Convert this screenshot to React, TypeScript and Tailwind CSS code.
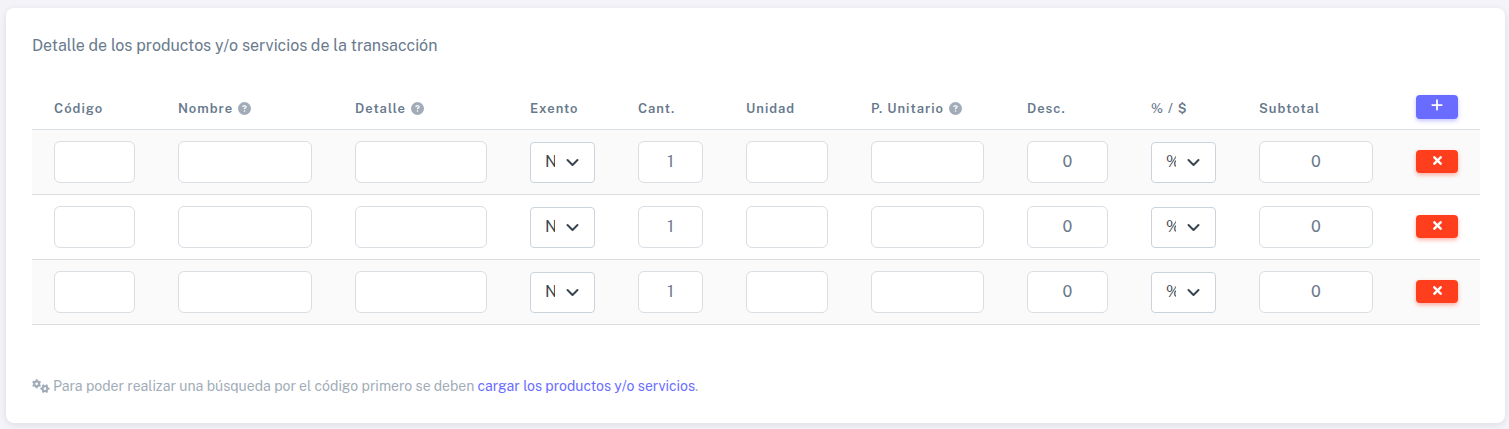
import type { ReactNode } from "react";
import { FaTimes } from "react-icons/fa";
import { FaCircleQuestion, FaGears, FaPlus } from "react-icons/fa6";

type Column = { label: string; width: string; help?: string };

const columns: Column[] = [
  { label: "Código", width: "w-[124px]" },
  { label: "Nombre", width: "w-[177px]", help: "Ayuda sobre el nombre" },
  { label: "Detalle", width: "w-[175px]", help: "Ayuda sobre el detalle" },
  { label: "Exento", width: "w-[108px]" },
  { label: "Cant.", width: "w-[108px]" },
  { label: "Unidad", width: "w-[125px]" },
  { label: "P. Unitario", width: "w-[156px]", help: "Ayuda sobre el precio unitario" },
  { label: "Desc.", width: "w-[124px]" },
  { label: "% / $", width: "w-[108px]" },
  { label: "Subtotal", width: "w-[157px]" },
];

function Cell({ children }: { children: ReactNode }) {
  return <td className="py-[11px] pl-[22px] pr-[21px] align-middle last:pr-[22px]">{children}</td>;
}

function Field({ label, value = "" }: { label: string; value?: string }) {
  return (
    <input
      type="text"
      aria-label={label}
      defaultValue={value}
      className="block h-[42px] w-full rounded-md border border-[#d9dee3] bg-white px-3 text-center text-base text-[#697a8d] outline-none focus:border-[#696cff]"
    />
  );
}

function Choice({ label, options }: { label: string; options: string[] }) {
  return (
    <div className="relative mt-px">
      <select
        aria-label={label}
        className="block h-[41px] w-full appearance-none rounded-sm border border-[#ccd4db] bg-white pl-3.5 pr-[39px] text-base text-[#384551] outline-none focus:border-[#696cff]"
      >
        {options.map((option) => (
          <option key={option}>{option}</option>
        ))}
      </select>
      <svg
        viewBox="0 0 16 16"
        fill="none"
        stroke="#384551"
        strokeWidth="2"
        strokeLinecap="round"
        strokeLinejoin="round"
        aria-hidden="true"
        className="pointer-events-none absolute right-3.5 top-3 size-4"
      >
        <path d="M2.5 6l5 5 5-5" />
      </svg>
    </div>
  );
}

function Row({ index }: { index: number }) {
  return (
    <tr className="border-b border-[#d9dee3] odd:bg-[#fafafa]">
      <Cell><Field label={`Código ${index}`} /></Cell>
      <Cell><Field label={`Nombre ${index}`} /></Cell>
      <Cell><Field label={`Detalle ${index}`} /></Cell>
      <Cell><Choice label={`Exento ${index}`} options={["No", "Si"]} /></Cell>
      <Cell><Field label={`Cantidad ${index}`} value="1" /></Cell>
      <Cell><Field label={`Unidad ${index}`} /></Cell>
      <Cell><Field label={`Precio unitario ${index}`} /></Cell>
      <Cell><Field label={`Descuento ${index}`} value="0" /></Cell>
      <Cell><Choice label={`Tipo de descuento ${index}`} options={["%", "$"]} /></Cell>
      <Cell><Field label={`Subtotal ${index}`} value="0" /></Cell>
      <Cell>
        <button
          type="button"
          aria-label={`Quitar línea ${index}`}
          className="flex h-[23px] w-full items-center justify-center rounded-sm bg-[#ff3e1d] pb-0.5 text-white shadow-[0_2px_4px_rgba(255,62,29,0.4)]"
        >
          <FaTimes className="size-[13px]" />
        </button>
      </Cell>
    </tr>
  );
}

export default function App() {
  return (
    <main className="min-h-screen bg-[#f3f3f8] pb-1.5 pl-1.5 pr-1 pt-2 font-['Public_Sans','Open_Sans',sans-serif] text-[#697a8d]">
      <section className="rounded-lg bg-white px-[26px] pb-[27px] pt-[26px] shadow-[0_2px_6px_rgba(67,89,113,0.12)]">
        <h1 className="text-base">Detalle de los productos y/o servicios de la transacción</h1>
        <table className="mt-[35px] w-full table-fixed border-collapse">
          <thead>
            <tr className="h-9 border-b border-[#d9dee3] text-[13px] font-semibold tracking-[1px] text-[#66788b]">
              {columns.map((column) => (
                <th
                  key={column.label}
                  scope="col"
                  className={`${column.width} whitespace-nowrap pb-1 pl-[22px] text-left align-middle font-semibold`}
                >
                  <span className="flex items-center gap-[5px]">
                    {column.label}
                    {column.help && (
                      <FaCircleQuestion aria-label={column.help} className="size-[13px] shrink-0 text-[#a1acb8]" />
                    )}
                  </span>
                </th>
              ))}
              <th scope="col" className="w-[86px] px-[22px] pb-2 align-middle">
                <button
                  type="button"
                  aria-label="Agregar línea"
                  className="flex h-6 w-full items-center justify-center rounded-sm bg-[#696cff] pb-1 text-white shadow-[0_2px_4px_rgba(105,108,255,0.4)]"
                >
                  <FaPlus className="size-3.5" />
                </button>
              </th>
            </tr>
          </thead>
          <tbody>
            <Row index={1} />
            <Row index={2} />
            <Row index={3} />
          </tbody>
        </table>
        <p className="mt-[51px] flex items-center gap-[3px] text-sm text-[#a1acb8]">
          <FaGears className="h-3.5 w-[18px] shrink-0" aria-hidden="true" />
          <span>
            Para poder realizar una búsqueda por el código primero se deben{" "}
            <a href="#productos" className="text-[#696cff]">cargar los productos y/o servicios</a>.
          </span>
        </p>
      </section>
    </main>
  );
}
